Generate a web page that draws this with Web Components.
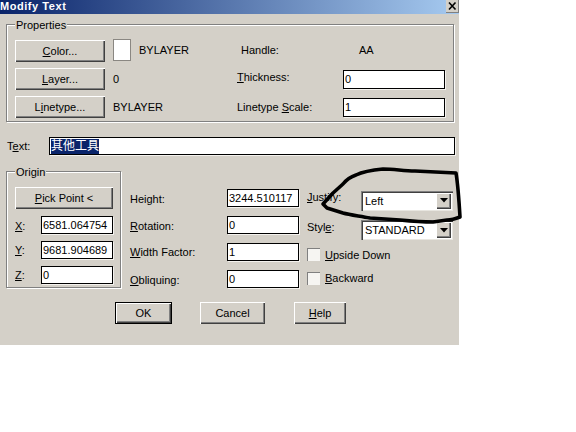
<!DOCTYPE html>
<html>
<head>
<meta charset="utf-8">
<title>Modify Text</title>
<style>
  html, body { margin: 0; padding: 0; background: #fff; }
  body { width: 576px; height: 432px; overflow: hidden; font: 11px "Liberation Sans", "Noto Sans CJK SC", sans-serif; color: #000; }
  u { text-decoration: underline; text-underline-offset: 1px; }
</style>
</head>
<body>
<modify-text-dialog></modify-text-dialog>

<template id="dialog-tpl">
  <style>
    :host { display: block; position: relative; width: 576px; height: 432px; }
    u { text-decoration: underline; text-underline-offset: 1px; }
    .dialog { width: 459px; height: 345px; background: #d4d0c8; display: flex; flex-direction: column; }
    .props { display: grid; grid-template-columns: 90px 132px 106px 102px; grid-auto-rows: 22px; row-gap: 6px; align-items: center; padding: 15px 0 0 8px; }
    .swatch-cell { display: flex; align-items: center; padding-left: 8px; gap: 8px; }
    .swatch { width: 16px; height: 20px; background: #fff; border: 1px solid #8a8782; margin-top: -2px; }
    .val { padding-left: 8px; }
    .up1 { padding-bottom: 2px; }
    .up2 { padding-bottom: 4px; }
    .down1 { padding-top: 2px; }
    .text-row { display: flex; align-items: center; height: 18px; margin: 15px 0 0 7px; }
    .text-row .lbl { width: 42px; }
    .text-row win-field { font-size: 12px; }
    .lower { display: flex; margin-top: 16px; height: 118px; }
    .origin-grid { display: grid; grid-template-columns: 26px 72px; grid-template-rows: 22px 18px 18px 18px; row-gap: 7px; align-items: center; padding: 15px 0 0 8px; }
    .origin-grid win-button { grid-column: 1 / 3; }
    .mid { display: grid; grid-template-columns: 97px 72px; grid-auto-rows: 18px; row-gap: 9px; align-items: center; margin: 18px 0 0 9px; }
    .right { display: grid; grid-template-columns: 54px 92px; grid-template-rows: 21px 20px 14px 14px; row-gap: 9px; align-items: center; margin: 19px 0 0 8px; }
    .right win-check { grid-column: 1 / 3; }
    .right .justify { padding-bottom: 7px; }
    .right .style { padding-bottom: 6px; }
    .right win-check.first { margin-top: -3px; }
    .right win-check.second { margin-top: -2px; }
    .actions { display: flex; margin: 13px 0 0 115px; }
    .actions win-button:nth-child(1) { width: 57px; }
    .actions win-button:nth-child(2) { width: 65px; margin-left: 28px; }
    .actions win-button:nth-child(3) { width: 52px; margin-left: 29px; }
    .ink { position: absolute; left: 0; top: 0; pointer-events: none; }
  </style>
  <div class="dialog">
    <title-bar>Modify Text</title-bar>
    <win-group label="Properties" style="width:448px;height:98px;margin:10px 0 0 6px">
      <div class="props">
        <win-button><u>C</u>olor...</win-button>
        <div class="swatch-cell"><span class="swatch"></span><span class="up1">BYLAYER</span></div>
        <span class="up1" style="padding-left:4px">Handle:</span>
        <span class="up1" style="padding-left:16px">AA</span>

        <win-button><u>L</u>ayer...</win-button>
        <span class="val">0</span>
        <span class="up2"><u>T</u>hickness:</span>
        <win-field style="height:19px">0</win-field>

        <win-button>L<u>i</u>netype...</win-button>
        <span class="val">BYLAYER</span>
        <span>Linetype <u>S</u>cale:</span>
        <win-field style="height:19px">1</win-field>
      </div>
    </win-group>

    <div class="text-row">
      <span class="lbl">T<u>e</u>xt:</span>
      <win-field style="width:406px" selected>其他工具</win-field>
    </div>

    <div class="lower">
      <win-group label="Origin" style="width:115px;height:117px;margin-left:6px">
        <div class="origin-grid">
          <win-button><u>P</u>ick Point &lt;</win-button>
          <span class="down1"><u>X</u>:</span><win-field>6581.064754</win-field>
          <span><u>Y</u>:</span><win-field>9681.904689</win-field>
          <span><u>Z</u>:</span><win-field>0</win-field>
        </div>
      </win-group>
      <div class="mid">
        <span class="down1">Height:</span><win-field>3244.510117</win-field>
        <span class="down1"><u>R</u>otation:</span><win-field>0</win-field>
        <span><u>W</u>idth Factor:</span><win-field>1</win-field>
        <span class="down1"><u>O</u>bliquing:</span><win-field>0</win-field>
      </div>
      <div class="right">
        <span class="justify"><u>J</u>ustify:</span><win-combo>Left</win-combo>
        <span class="style">Styl<u>e</u>:</span><win-combo>STANDARD</win-combo>
        <win-check class="first"><u>U</u>pside Down</win-check>
        <win-check class="second"><u>B</u>ackward</win-check>
      </div>
    </div>

    <div class="actions">
      <win-button default>OK</win-button>
      <win-button>Cancel</win-button>
      <win-button><u>H</u>elp</win-button>
    </div>
  </div>
  <svg class="ink" width="576" height="432" viewBox="0 0 576 432">
    <path d="M323 204 L333 193 L343 184 C347 179 350 177 356 175 C364 171 372 170 383 169 C395 169 403 171 415 171 L456 173 C458 185 459 200 460 217 C455 219 451 220 447 220 L433 222 C420 222 410 221 400 220 L370 218 C360 216 350 215 343 213 L327 208 Z" fill="none" stroke="#000" stroke-width="3.6" stroke-linejoin="round"/>
  </svg>
</template>

<script>
  class TitleBar extends HTMLElement {
    constructor() {
      super();
      this.attachShadow({ mode: 'open' });
      this.shadowRoot.innerHTML = `
        <style>
          :host { display: flex; height: 14px; background: linear-gradient(90deg, #0a246a, #a6caf0); color: #fff; font: bold 11px "Liberation Sans", sans-serif; line-height: 13px; }
          .caption { flex: 1; letter-spacing: 0.55px; }
          .close { width: 13px; height: 13px; background: #d4d0c8; color: #000; box-shadow: inset -1px -1px #808080; display: flex; }
          svg { display: block; }
        </style>
        <span class="caption"><slot></slot></span>
        <span class="close"><svg width="13" height="13" viewBox="0 0 13 13"><path d="M3 2.5 L9.5 9.5 M9.5 2.5 L3 9.5" stroke="#000" stroke-width="1.6" fill="none"/></svg></span>
      `;
    }
  }

  class WinGroup extends HTMLElement {
    constructor() {
      super();
      this.attachShadow({ mode: 'open' });
      this.shadowRoot.innerHTML = `
        <style>
          :host { display: block; position: relative; box-sizing: border-box; border: 1px solid #808080; box-shadow: 1px 1px #fff, inset 1px 1px #fff; }
          .legend { position: absolute; left: 8px; top: -7px; background: #d4d0c8; padding: 0 1px; line-height: 14px; }
        </style>
        <span class="legend"></span>
        <slot></slot>
      `;
    }
    connectedCallback() {
      this.shadowRoot.querySelector('.legend').textContent = this.getAttribute('label');
    }
  }

  class WinButton extends HTMLElement {
    constructor() {
      super();
      this.attachShadow({ mode: 'open' });
      this.shadowRoot.innerHTML = `
        <style>
          :host { display: flex; box-sizing: border-box; height: 22px; align-items: center; justify-content: center; background: #d4d0c8; box-shadow: inset 1px 1px #fff, inset -1px -1px #404040, inset -2px -2px #808080; }
          :host([default]) { border: 1px solid #000; }
        </style>
        <slot></slot>
      `;
    }
  }

  class WinField extends HTMLElement {
    constructor() {
      super();
      this.attachShadow({ mode: 'open' });
      this.shadowRoot.innerHTML = `
        <style>
          :host { display: flex; box-sizing: border-box; height: 18px; align-items: center; background: #fff; border: 1px solid #000; box-shadow: 1px 1px #f4f2ee; padding-left: 1px; white-space: nowrap; overflow: hidden; }
          :host([selected]) span { background: #0a246a; color: #fff; line-height: 15px; }
        </style>
        <span><slot></slot></span>
      `;
    }
  }

  class WinCombo extends HTMLElement {
    constructor() {
      super();
      this.attachShadow({ mode: 'open' });
      this.shadowRoot.innerHTML = `
        <style>
          :host { display: flex; box-sizing: border-box; height: 20px; align-items: center; background: #fff; box-shadow: inset 1px 1px #808080, inset 2px 2px #404040, inset -1px -1px #e8e6e0; padding: 2px 2px 2px 4px; }
          .text { flex: 1; white-space: nowrap; overflow: hidden; }
          .arrow { width: 15px; height: 16px; background: #d4d0c8; box-shadow: inset 1px 1px #fff, inset -1px -1px #404040, inset -2px -2px #808080; display: flex; align-items: center; justify-content: center; }
        </style>
        <span class="text"><slot></slot></span>
        <span class="arrow"><svg width="8" height="5" viewBox="0 0 8 5"><path d="M0 0 H8 L4 4.5 Z" fill="#000"/></svg></span>
      `;
    }
  }

  class WinCheck extends HTMLElement {
    constructor() {
      super();
      this.attachShadow({ mode: 'open' });
      this.shadowRoot.innerHTML = `
        <style>
          :host { display: flex; align-items: center; gap: 5px; height: 14px; }
          .box { width: 13px; height: 13px; box-sizing: border-box; background: #f6f5f2; box-shadow: inset 1px 1px #808080; }
        </style>
        <span class="box"></span>
        <span><slot></slot></span>
      `;
    }
  }

  class ModifyTextDialog extends HTMLElement {
    constructor() {
      super();
      this.attachShadow({ mode: 'open' });
      const tpl = document.getElementById('dialog-tpl');
      this.shadowRoot.appendChild(tpl.content.cloneNode(true));
    }
  }

  customElements.define('title-bar', TitleBar);
  customElements.define('win-group', WinGroup);
  customElements.define('win-button', WinButton);
  customElements.define('win-field', WinField);
  customElements.define('win-combo', WinCombo);
  customElements.define('win-check', WinCheck);
  customElements.define('modify-text-dialog', ModifyTextDialog);
</script>
</body>
</html>
